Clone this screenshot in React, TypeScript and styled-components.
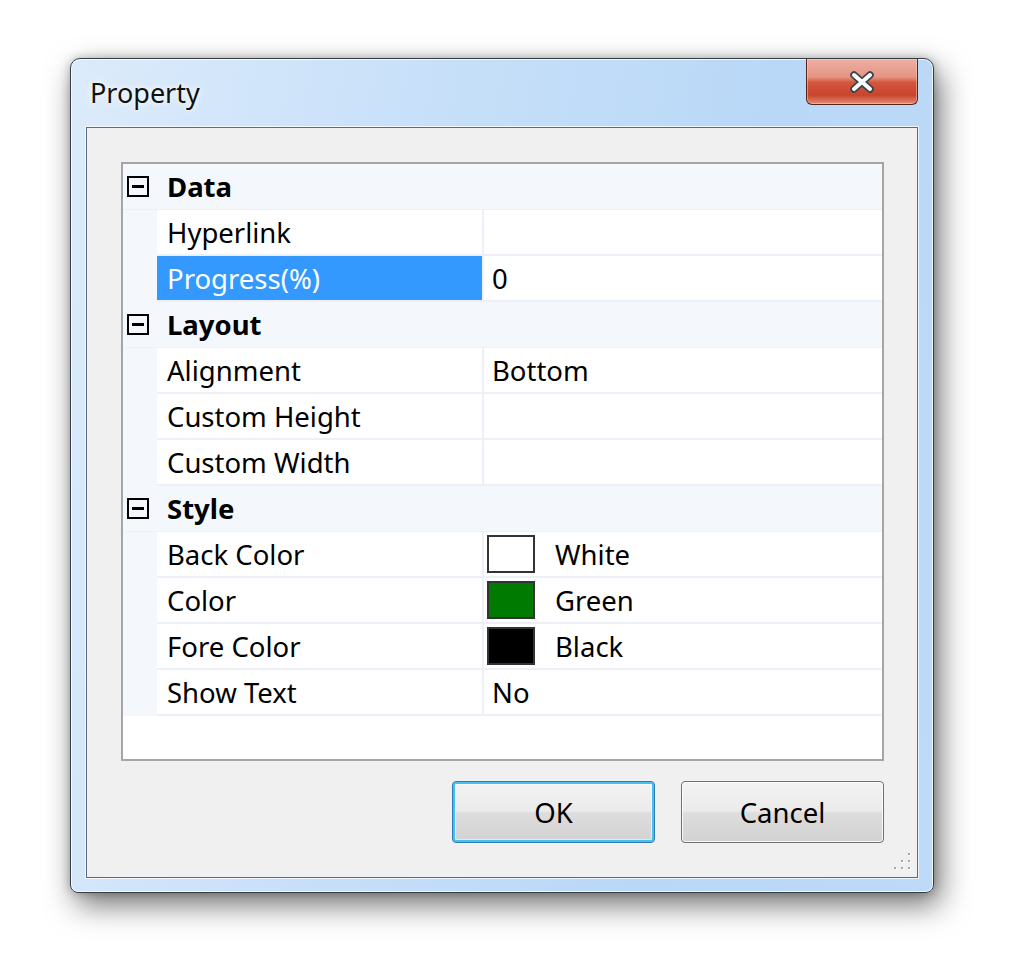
import React from "react";
import styled, { createGlobalStyle, css } from "styled-components";

const GlobalStyle = createGlobalStyle`
  html, body { margin: 0; padding: 0; background: #ffffff; }
  body { font-family: "Noto Sans", "Open Sans", sans-serif; }
`;

const UI_FONT = `"Noto Sans", "Open Sans", sans-serif`;

const Page = styled.div`
  width: 1020px;
  height: 977px;
  box-sizing: border-box;
  padding: 58px 0 0 70px;
  background: #ffffff;
`;

const Window = styled.div`
  width: 864px;
  height: 835px;
  box-sizing: border-box;
  border: 1px solid #363c44;
  border-radius: 10px 10px 8px 8px;
  background: linear-gradient(100deg, #dcebfb 0%, #c8e0f9 35%, #b9d8f7 70%, #bddaf7 100%);
  box-shadow: inset 0 0 0 1px rgba(255, 255, 255, 0.8), 6px 12px 30px rgba(0, 0, 0, 0.55),
    0 0 10px rgba(0, 0, 0, 0.25);
  display: flex;
  flex-direction: column;
`;

const TitleBar = styled.div`
  height: 68px;
  flex: none;
  display: flex;
  justify-content: space-between;
  align-items: flex-start;
  padding: 0 15px 0 19px;
`;

const Title = styled.div`
  margin-top: 16px;
  font-family: ${UI_FONT};
  font-size: 27px;
  line-height: 36px;
  color: #111;
  text-shadow: 0 0 10px rgba(255, 255, 255, 0.9), 0 0 4px rgba(255, 255, 255, 0.8);
`;

const CloseButton = styled.div`
  width: 112px;
  height: 46px;
  box-sizing: border-box;
  border: 1px solid #5b2219;
  border-top: none;
  border-radius: 0 0 6px 6px;
  background: linear-gradient(
    180deg,
    #eeb0a3 0%,
    #e49584 40%,
    #d4573d 52%,
    #c7452c 80%,
    #e28b75 100%
  );
  box-shadow: inset 0 0 0 1px rgba(255, 220, 210, 0.45);
  display: flex;
  align-items: center;
  justify-content: center;
`;

const ClientArea = styled.div`
  flex: 1;
  margin: 0 15px 14px;
  box-sizing: border-box;
  border: 1px solid #5c6b7c;
  box-shadow: 0 0 0 1px rgba(255, 255, 255, 0.75);
  background: #f0f0f0;
  padding: 34px 33px 34px 34px;
  display: flex;
  flex-direction: column;
  gap: 20px;
  position: relative;
`;

const PropertyGrid = styled.div`
  height: 599px;
  box-sizing: border-box;
  border: 2px solid #a5a5a5;
  background: #ffffff;
  display: flex;
  flex-direction: column;
`;

const CategoryRow = styled.div`
  display: grid;
  grid-template-columns: 34px 1fr;
  height: 46px;
  flex: none;
  background: #f4f7fc;
  box-sizing: border-box;
  border-bottom: 1px solid #edf1f7;
`;

const Gutter = styled.div`
  background: #f4f7fc;
  display: flex;
  align-items: center;
  padding-left: 4px;
`;

const MinusBox = styled.div`
  width: 22px;
  height: 21px;
  box-sizing: border-box;
  border: 2px solid #000;
  display: flex;
  align-items: center;
  justify-content: center;
  &::after {
    content: "";
    width: 12px;
    height: 3px;
    background: #000;
  }
`;

const CellText = css`
  font-family: ${UI_FONT};
  font-size: 27.5px;
  color: #000;
  white-space: nowrap;
  display: flex;
  align-items: center;
`;

const CategoryLabel = styled.div`
  ${CellText};
  font-weight: 700;
  padding-left: 10px;
`;

const PropRow = styled.div`
  display: grid;
  grid-template-columns: 34px 325px 1fr;
  height: 46px;
  flex: none;
`;

const NameCell = styled.div<{ $selected?: boolean }>`
  ${CellText};
  box-sizing: border-box;
  padding-left: 10px;
  border-bottom: 2px solid #edf1f7;
  background: ${(p) => (p.$selected ? "#3399ff" : "#ffffff")};
  color: ${(p) => (p.$selected ? "#ffffff" : "#000")};
`;

const ValueCell = styled.div<{ $swatch?: boolean }>`
  ${CellText};
  box-sizing: border-box;
  padding-left: ${(p) => (p.$swatch ? "3px" : "8px")};
  border-left: 2px solid #edf1f7;
  border-bottom: 2px solid #edf1f7;
  background: #ffffff;
`;

const Swatch = styled.span<{ $color: string }>`
  width: 48px;
  height: 38px;
  box-sizing: border-box;
  border: 2px solid #333;
  background: ${(p) => p.$color};
  margin-right: 20px;
  flex: none;
`;

const ButtonRow = styled.div`
  display: flex;
  justify-content: flex-end;
  gap: 26px;
`;

const Button = styled.button<{ $default?: boolean }>`
  width: 203px;
  height: 62px;
  box-sizing: border-box;
  border: 1px solid ${(p) => (p.$default ? "#2f7bb0" : "#707070")};
  border-radius: 4px;
  background: linear-gradient(180deg, #f3f3f3 0%, #ebebeb 48%, #dddddd 52%, #d2d2d2 100%);
  box-shadow: ${(p) =>
    p.$default
      ? "inset 0 0 0 2px #45c0f0, inset 0 0 0 3px rgba(255,255,255,0.5)"
      : "inset 0 0 0 1px rgba(255,255,255,0.85)"};
  font-family: ${UI_FONT};
  font-size: 27.5px;
  color: #000;
  padding: 0;
  cursor: default;
`;

const Grip = styled.svg`
  position: absolute;
  right: 5px;
  bottom: 6px;
`;

type Prop = { name: string; value?: string; swatch?: string; selected?: boolean };
type Category = { title: string; props: Prop[] };

const categories: Category[] = [
  {
    title: "Data",
    props: [
      { name: "Hyperlink", value: "" },
      { name: "Progress(%)", value: "0", selected: true },
    ],
  },
  {
    title: "Layout",
    props: [
      { name: "Alignment", value: "Bottom" },
      { name: "Custom Height", value: "" },
      { name: "Custom Width", value: "" },
    ],
  },
  {
    title: "Style",
    props: [
      { name: "Back Color", value: "White", swatch: "#ffffff" },
      { name: "Color", value: "Green", swatch: "#007a00" },
      { name: "Fore Color", value: "Black", swatch: "#000000" },
      { name: "Show Text", value: "No" },
    ],
  },
];

const CloseGlyph = () => (
  <svg width="26" height="22" viewBox="0 0 26 22">
    <path d="M5 4 L21 18 M21 4 L5 18" stroke="#3b4350" strokeWidth="7.5" strokeLinecap="round" />
    <path d="M5 4 L21 18 M21 4 L5 18" stroke="#ffffff" strokeWidth="4" strokeLinecap="round" />
  </svg>
);

const GripDots = () => {
  const dots: [number, number][] = [
    [16, 2],
    [9, 9],
    [16, 9],
    [2, 16],
    [9, 16],
    [16, 16],
  ];
  return (
    <Grip width="20" height="20" viewBox="0 0 20 20">
      {dots.map(([x, y], i) => (
        <g key={i}>
          <rect x={x + 1} y={y + 1} width="2" height="2" fill="#ffffff" />
          <rect x={x} y={y} width="2" height="2" fill="#a8a8a8" />
        </g>
      ))}
    </Grip>
  );
};

export default function App() {
  return (
    <>
      <GlobalStyle />
      <Page>
        <Window>
          <TitleBar>
            <Title>Property</Title>
            <CloseButton>
              <CloseGlyph />
            </CloseButton>
          </TitleBar>
          <ClientArea>
            <PropertyGrid>
              {categories.map((cat) => (
                <React.Fragment key={cat.title}>
                  <CategoryRow>
                    <Gutter>
                      <MinusBox />
                    </Gutter>
                    <CategoryLabel>{cat.title}</CategoryLabel>
                  </CategoryRow>
                  {cat.props.map((p) => (
                    <PropRow key={p.name}>
                      <Gutter />
                      <NameCell $selected={p.selected}>{p.name}</NameCell>
                      <ValueCell $swatch={!!p.swatch}>
                        {p.swatch && <Swatch $color={p.swatch} />}
                        {p.value}
                      </ValueCell>
                    </PropRow>
                  ))}
                </React.Fragment>
              ))}
            </PropertyGrid>
            <ButtonRow>
              <Button $default>OK</Button>
              <Button>Cancel</Button>
            </ButtonRow>
            <GripDots />
          </ClientArea>
        </Window>
      </Page>
    </>
  );
}
